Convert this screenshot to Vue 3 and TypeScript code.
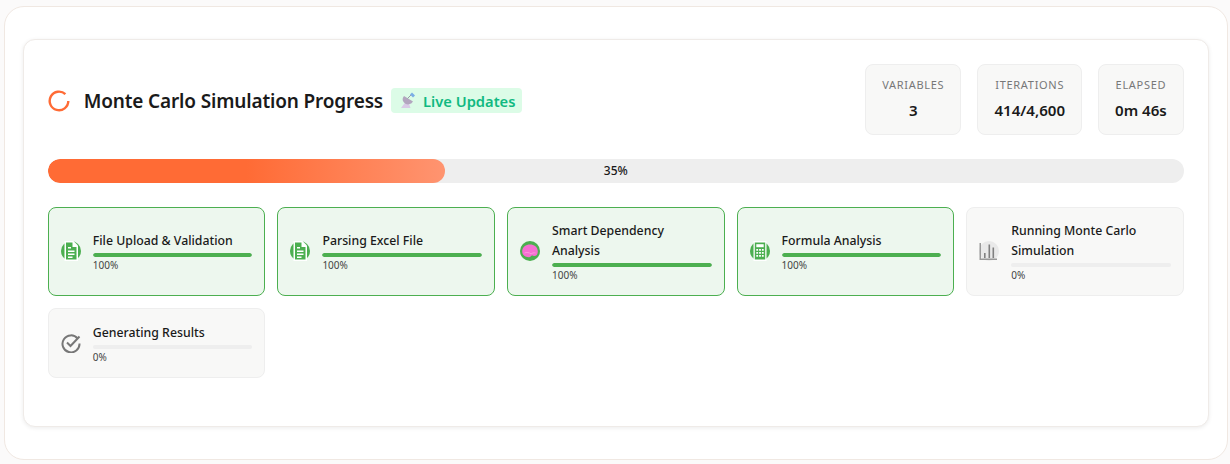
<script setup lang="ts">
interface Step {
  title: string
  percent: number
  icon: 'doc' | 'brain' | 'calc' | 'chart' | 'check'
}

interface Stat {
  label: string
  value: string
}

const stats: Stat[] = [
  { label: 'Variables', value: '3' },
  { label: 'Iterations', value: '414/4,600' },
  { label: 'Elapsed', value: '0m 46s' },
]

const steps: Step[] = [
  { title: 'File Upload & Validation', percent: 100, icon: 'doc' },
  { title: 'Parsing Excel File', percent: 100, icon: 'doc' },
  { title: 'Smart Dependency Analysis', percent: 100, icon: 'brain' },
  { title: 'Formula Analysis', percent: 100, icon: 'calc' },
  { title: 'Running Monte Carlo Simulation', percent: 0, icon: 'chart' },
  { title: 'Generating Results', percent: 0, icon: 'check' },
]

const overall = 35
</script>

<template>
  <div class="page">
    <div class="outer">
      <div class="panel">
        <div class="header">
          <div class="heading">
            <svg class="spinner" width="22" height="22" viewBox="0 0 22 22">
              <path d="M17.4 4.2A9.3 9.3 0 1 0 20.3 11" fill="none" stroke="#ff6b35" stroke-width="2.4" />
            </svg>
            <h2 class="title">Monte Carlo Simulation Progress</h2>
            <span class="live">
              <svg width="18" height="18" viewBox="0 0 18 18">
                <path d="M7.5 10h3l2 6H3z" fill="#d9cbe6" />
                <path d="M6 4 15 9.5A5.5 5.5 0 0 1 6 10.5 5 5 0 0 1 6 4z" fill="#b3a6bf" />
                <path d="M9.5 6.5 13 3" stroke="#9a9aa8" stroke-width="1" />
                <path d="m12 2.5 2-2 3 3-2 2z" fill="#7aaee6" />
              </svg>
              Live Updates
            </span>
          </div>
          <div class="stats">
            <div v-for="s in stats" :key="s.label" class="stat">
              <div class="stat-label">{{ s.label }}</div>
              <div class="stat-value">{{ s.value }}</div>
            </div>
          </div>
        </div>

        <div class="overall">
          <div class="overall-fill" :style="{ width: overall + '%' }"></div>
          <span class="overall-text">{{ overall }}%</span>
        </div>

        <div class="steps">
          <div v-for="step in steps" :key="step.title" class="step" :class="{ done: step.percent === 100 }">
            <div class="step-icon">
              <svg v-if="step.icon === 'doc'" width="20" height="20" viewBox="0 0 20 20">
                <circle cx="10" cy="10" r="10" fill="#4caf50" />
                <path d="M3.5 0H12.5L17 4.5V20H3.5z" fill="#fff" />
                <path d="M5 1.5H11.5V6H15.5V18.5H5z" fill="#4caf50" />
                <path d="M7 6h3v1.5H7zM7 9.5h6.5V11H7zM7 12.5h6.5V14H7zM7 15.5h4.5V17H7z" fill="#fff" />
              </svg>
              <svg v-else-if="step.icon === 'brain'" width="20" height="20" viewBox="0 0 20 20">
                <circle cx="10" cy="10" r="10" fill="#4caf50" />
                <path d="M2.2 10.5C2.2 6 6 3.5 10 3.5s7.8 2.5 7.8 7c0 2.5-1 4.5-3.3 4.5-1 0-1.5-.5-2.5-.5s-1.5 1.8-3 1.8c-3 0-6.800-1.800-6.800-5.800z" fill="#f76ed2" />
                <path d="M4.5 12c2-1 5-.5 6.500 1 1-1 3-1.500 4.500-1" stroke="#fb9be0" stroke-width="1" fill="none" />
              </svg>
              <svg v-else-if="step.icon === 'calc'" width="20" height="20" viewBox="0 0 20 20">
                <circle cx="10" cy="10" r="10" fill="#4caf50" />
                <path d="M3.5 0h13v20h-13z" fill="#fff" />
                <path d="M4.8 1.5h10.4v17H4.8z" fill="#4caf50" />
                <path d="M6.3 3.2h7.4v3H6.3z" fill="#fff" />
                <path d="M6.3 8h1.8v1.8H6.3zM9.1 8h1.8v1.8H9.1zM11.9 8h1.8v1.8h-1.8zM6.3 11h1.8v1.8H6.3zM9.1 11h1.8v1.8H9.1zM11.9 11h1.8v1.8h-1.8zM6.3 14h1.8v1.8H6.3zM9.1 14h1.8v1.8H9.1zM11.9 14h1.8v1.8h-1.8z" fill="#fff" />
              </svg>
              <svg v-else-if="step.icon === 'chart'" width="20" height="20" viewBox="0 0 20 20">
                <circle cx="10" cy="10" r="10" fill="#e9e9e9" />
                <path d="M.5 2H2V17.5H18V19H.5z" fill="#999" />
                <path d="M5 12h1.6v5H5zM9.5 3.5h1.6V17H9.5zM13.5 6.5h1.6V17h-1.6z" fill="#808080" />
              </svg>
              <svg v-else width="20" height="20" viewBox="0 0 20 20">
                <path d="M16.6 5.5A8.5 8.5 0 1 0 18.5 10.5" fill="none" stroke="#777" stroke-width="2" />
                <path d="M6 9.5 9.5 13 18.5 3.5" fill="none" stroke="#777" stroke-width="2" />
              </svg>
            </div>
            <div class="step-body">
              <div class="step-title">{{ step.title }}</div>
              <div class="step-track">
                <div class="step-fill" :style="{ width: step.percent + '%' }"></div>
              </div>
              <div class="step-percent">{{ step.percent }}%</div>
            </div>
          </div>
        </div>
      </div>
    </div>
  </div>
</template>

<style>
html,
body {
  margin: 0;
  background: #fbfafa;
}
</style>

<style scoped>
.page {
  padding: 6px 2.2px 4px 3.8px;
  font-family: "Noto Sans", "Open Sans", sans-serif;
  color: #1a1a1a;
}

.outer {
  background: #fff;
  border: 1px solid #f0e8e2;
  border-radius: 20px;
  padding: 32px 18px;
}

.panel {
  background: #fff;
  border: 1px solid #efebe8;
  border-radius: 12px;
  box-shadow: 0 1px 4px rgba(0, 0, 0, 0.08);
  padding: 24px;
}

.header {
  display: flex;
  align-items: center;
  justify-content: space-between;
  margin-bottom: 24px;
}

.heading {
  display: flex;
  align-items: center;
  margin-top: 3px;
}

.spinner {
  margin-right: 14px;
}

.title {
  margin: 0;
  font-size: 19px;
  font-weight: 600;
  letter-spacing: -0.16px;
  line-height: 28px;
}

.live {
  display: flex;
  align-items: center;
  gap: 7px;
  height: 25px;
  margin-left: 8px;
  padding: 0 7px;
  border-radius: 4px;
  background: #dcfce7;
  color: #10b981;
  font-size: 14.7px;
  font-weight: 600;
}

.stats {
  display: flex;
  gap: 16px;
}

.stat {
  background: #f8f8f7;
  border: 1px solid #eeeeee;
  border-radius: 8px;
  padding: 12px 16px;
  text-align: center;
}

.stat-label {
  font-size: 11px;
  line-height: 16px;
  letter-spacing: 0.7px;
  text-transform: uppercase;
  color: #777;
  margin-bottom: 6px;
}

.stat-value {
  font-size: 15.1px;
  line-height: 22.5px;
  font-weight: 600;
}

.overall {
  position: relative;
  height: 24px;
  background: #eeeeee;
  border-radius: 12px;
  overflow: hidden;
  margin-bottom: 24px;
}

.overall-fill {
  height: 100%;
  border-radius: 12px;
  background: linear-gradient(90deg, #ff6b35 50%, #ff9470 100%);
}

.overall-text {
  position: absolute;
  inset: 0;
  display: flex;
  align-items: center;
  justify-content: center;
  font-size: 12px;
  font-weight: 500;
}

.steps {
  display: grid;
  grid-template-columns: repeat(5, 1fr);
  gap: 12px;
  margin-bottom: 23.5px;
}

.step {
  display: flex;
  align-items: center;
  gap: 12px;
  padding: 12px;
  background: #f8f8f7;
  border: 1px solid #eeeeee;
  border-radius: 8px;
}

.step.done {
  background: #edf7ee;
  border-color: #4caf50;
}

.step-icon {
  flex: none;
  width: 20px;
  height: 20px;
  display: flex;
}

.step-body {
  flex: 1;
  min-width: 0;
}

.step-title {
  padding-top: 1.5px;
  font-size: 12.3px;
  line-height: 19.5px;
  font-weight: 500;
}

.step-track {
  height: 4px;
  margin-top: 2.5px;
  background: #eeeeee;
  border-radius: 2px;
  overflow: hidden;
}

.step-fill {
  height: 100%;
  background: #4caf50;
  border-radius: 2px;
}

.step-percent {
  font-size: 10px;
  line-height: 16.5px;
  color: #444;
}
</style>
